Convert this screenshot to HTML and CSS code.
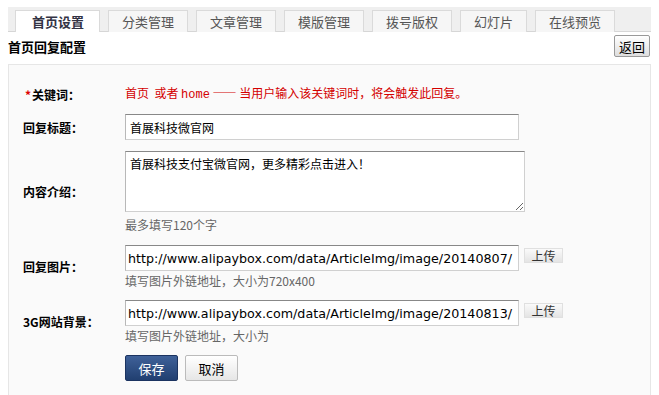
FILE: index.html
```html
<!DOCTYPE html>
<html lang="zh">
<head>
  <meta charset="UTF-8" />
  <title>首页回复配置</title>
  <link rel="stylesheet" href="styles.css">
</head>
<body>

  <div class="tabs">
    <div class="tab active">首页设置</div>
    <div class="tab">分类管理</div>
    <div class="tab">文章管理</div>
    <div class="tab">模版管理</div>
    <div class="tab">拨号版权</div>
    <div class="tab">幻灯片</div>
    <div class="tab">在线预览</div>
  </div>

  <div class="head">
    <h2>首页回复配置</h2>
    <button class="back-btn">返回</button>
  </div>

  <div class="panel">
    <div class="row row-key">
      <label class="label"><span class="star">*</span>关键词：</label>
      <div class="field red">首页&nbsp; 或者 <span class="mono">home</span> —— 当用户输入该关键词时，将会触发此回复。</div>
    </div>

    <div class="row row-title">
      <label class="label">回复标题：</label>
      <div class="field"><input class="txt" type="text" value="首展科技微官网" /></div>
    </div>

    <div class="row row-desc">
      <label class="label">内容介绍：</label>
      <div class="field">
        <textarea class="area">首展科技支付宝微官网，更多精彩点击进入！</textarea>
        <div class="hint">最多填写120个字</div>
      </div>
    </div>

    <div class="row row-pic">
      <label class="label">回复图片：</label>
      <div class="field">
        <div class="line">
          <input class="txt url" type="text" value="http://www.alipaybox.com/data/ArticleImg/image/20140807/" />
          <button class="upload">上传</button>
        </div>
        <div class="hint near">填写图片外链地址，大小为720x400</div>
      </div>
    </div>

    <div class="row row-bg">
      <label class="label">3G网站背景：</label>
      <div class="field">
        <div class="line">
          <input class="txt url" type="text" value="http://www.alipaybox.com/data/ArticleImg/image/20140813/" />
          <button class="upload">上传</button>
        </div>
        <div class="hint near">填写图片外链地址，大小为</div>
      </div>
    </div>

    <div class="row row-btns">
      <span class="label"></span>
      <div class="field btns">
        <button class="btn save">保存</button>
        <button class="btn cancel">取消</button>
      </div>
    </div>
  </div>

</body>
</html>
```

FILE: styles.css
```css
body {
  margin: 0;
  padding: 7px 8px 0;
  font-family: "Noto Sans CJK SC", sans-serif;
  font-size: 12px;
  color: #222;
  background: #fff;
}
.tabs {
  display: flex;
  gap: 8px;
  height: 25px;
  padding: 3px 0 0 7px;
  box-sizing: border-box;
  background: #efefef;
  border-bottom: 1px solid #d6d6d6;
}
.tab {
  height: 22px;
  padding: 0 13px;
  box-sizing: border-box;
  border: 1px solid #dadada;
  border-bottom: none;
  background: #f6f6f6;
  color: #555;
  font-size: 13px;
  line-height: 21px;
  text-align: center;
}
.tab.active {
  padding: 0 15px 0 16px;
  background: #fff;
  color: #334;
  font-weight: bold;
}
.head {
  display: flex;
  justify-content: space-between;
  align-items: center;
  height: 28px;
}
.head h2 {
  margin: 0;
  font-size: 13px;
  font-weight: bold;
  color: #000;
}
.back-btn {
  width: 36px;
  height: 22px;
  margin-right: 1px;
  padding: 0;
  border: 1px solid #999;
  border-radius: 2px;
  background: linear-gradient(#fff, #dedede);
  font-family: inherit;
  font-size: 13px;
  color: #000;
}
.panel {
  margin-top: 4px;
  padding: 19px 0 20px 14px;
  border: 1px solid #e6e6e6;
  background: #fafafa;
  min-height: 320px;
  box-sizing: border-box;
}
.row {
  display: flex;
  align-items: center;
}
.label {
  width: 102px;
  flex-shrink: 0;
  font-weight: bold;
  font-size: 12px;
  color: #000;
}
.star {
  color: #d00;
  margin: 0 1px 0 2px;
}
.field {
  display: flex;
  flex-direction: column;
}
.red {
  color: #d40000;
  line-height: 18px;
  display: block;
}
.mono {
  font-family: "Liberation Mono", monospace;
  font-size: 12px;
}
.row-title { margin-top: 10px; }
.row-desc { margin-top: 11px; }
.row-pic { margin-top: 13px; }
.row-bg { margin-top: 12px; }
.row-btns { margin-top: 12px; }
.txt, .area {
  box-sizing: border-box;
  border: 1px solid #d0d0d0;
  border-top-color: #888;
  border-left-color: #b8b8b8;
  background: #fff;
  font-family: "Noto Sans CJK SC", sans-serif;
  font-size: 12px;
  color: #000;
  margin: 0;
}
.txt {
  width: 394px;
  height: 26px;
  padding: 0 4px;
}
.url {
  font-family: "DejaVu Sans", sans-serif;
  font-size: 12.7px;
  padding: 0 1px 0 2px;
}
.area {
  width: 400px;
  height: 61px;
  padding: 3px 4px;
  resize: both;
  line-height: 18px;
}
.hint {
  margin-top: 5px;
  color: #666;
  line-height: 15px;
}
.hint.near {
  margin-top: 2px;
}
.line {
  display: flex;
  align-items: flex-start;
}
.upload {
  margin: 3px 0 0 5px;
  width: 39px;
  height: 15px;
  padding: 0;
  border: 1px solid #e0e0e0;
  background: linear-gradient(#fafafa, #e4e4e4);
  font-family: inherit;
  font-size: 12px;
  line-height: 12px;
  color: #333;
}
.btns {
  flex-direction: row;
  gap: 7px;
}
.btn {
  width: 53px;
  height: 26px;
  padding: 0;
  border-radius: 2px;
  font-family: inherit;
  font-size: 13px;
}
.save {
  border: 1px solid #1b3360;
  background: linear-gradient(#3f6199, #213f70);
  color: #fff;
}
.cancel {
  border: 1px solid #bbb;
  background: linear-gradient(#fff, #e6e6e6);
  color: #000;
}
```
